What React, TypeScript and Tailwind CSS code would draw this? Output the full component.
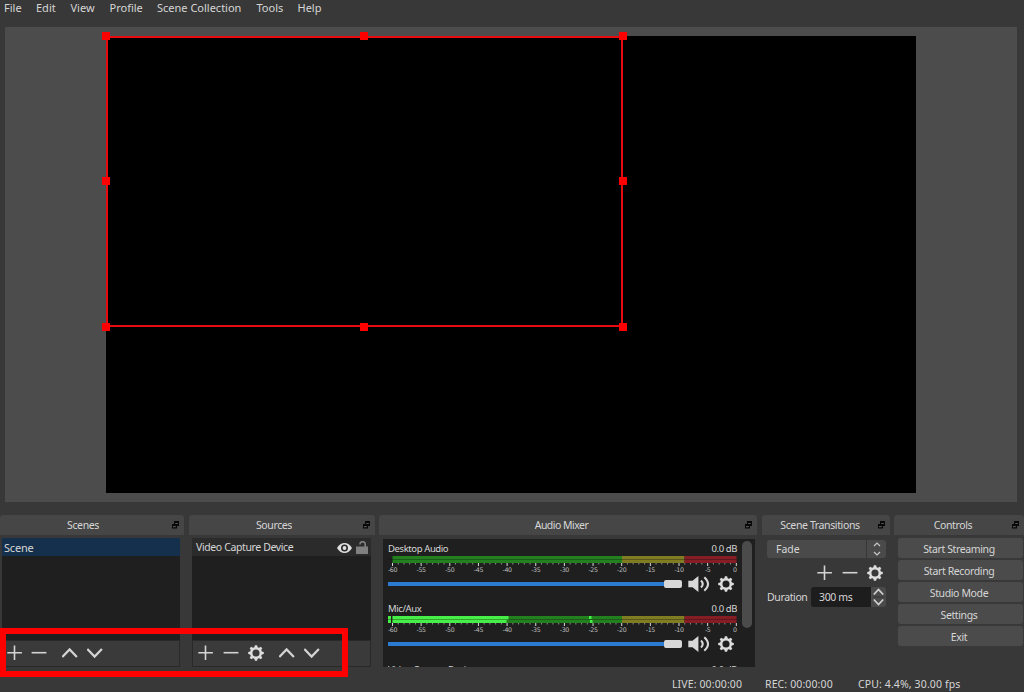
import type { ReactNode } from "react";

// ============================================================
// Icons
// ============================================================

interface IconProps {
  className?: string;
}

function PlusIcon({ className }: IconProps) {
  return (
    <svg className={`size-4 shrink-0 ${className ?? ""}`} fill="none" stroke="#d4d4d4" strokeWidth="1.6" viewBox="0 0 16 16">
      <path d="M7.5 .5v14.4M.3 7.7h14.6" />
    </svg>
  );
}

function MinusIcon({ className }: IconProps) {
  return (
    <svg className={`size-4 shrink-0 ${className ?? ""}`} fill="none" stroke="#d4d4d4" strokeWidth="1.6" viewBox="0 0 16 16">
      <path d="M.6 7.7h14.8" />
    </svg>
  );
}

function ChevronIcon({ down = false, className }: IconProps & { down?: boolean }) {
  return (
    <svg className={`size-4 shrink-0 ${className ?? ""}`} fill="none" stroke="#d4d4d4" strokeWidth="2.2" viewBox="0 0 16 16">
      <path d={down ? "M.3 4 7.6 11.6 14.9 4" : "M.3 12 7.6 4.4l7.3 7.6"} />
    </svg>
  );
}

const GEAR_ANGLES = [0, 45, 90, 135, 180, 225, 270, 315];

function GearIcon({ className }: IconProps) {
  return (
    <svg className={`size-4 shrink-0 ${className ?? ""}`} viewBox="0 0 16 16">
      <circle cx="8" cy="8" fill="none" r="4.8" stroke="#dcdcdc" strokeWidth="2.5" />
      {GEAR_ANGLES.map((angle) => (
        <path d="M6.2 3 6.9 .2h2.2L9.8 3z" fill="#dcdcdc" key={angle} transform={`rotate(${angle} 8 8)`} />
      ))}
    </svg>
  );
}

function SpeakerIcon() {
  return (
    <svg className="h-4 w-[22px] shrink-0" fill="none" viewBox="0 0 22 16">
      <path d="M.3 4.7h4.2L10.4 0v16L4.500 11.300H.3z" fill="#d8d8d8" />
      <path d="M13 4.500q3.500 3.500 0 7" stroke="#d8d8d8" strokeWidth="2" />
      <path d="M16.300 1.300q7.500 6.700 0 13.400" stroke="#d8d8d8" strokeWidth="2" />
    </svg>
  );
}

function EyeIcon() {
  return (
    <svg className="h-[10px] w-[15px] shrink-0" viewBox="0 0 15 10">
      <path d="M0 5Q3 0 7.500 0T15 5Q12 10 7.500 10T0 5z" fill="#e0e0e0" />
      <circle cx="7.5" cy="5" fill="#2b2b2b" r="3.5" />
      <circle cx="7.5" cy="5" fill="#e0e0e0" r="1.9" />
    </svg>
  );
}

function UnlockIcon() {
  return (
    <svg className="h-[13px] w-[12px] shrink-0" viewBox="0 0 12 13">
      <path d="M0 5.500h12V13H0z" fill="#808080" />
      <path d="M4 3.500V3a2.600 2.300 0 0 1 5.200 0v3.500" fill="none" stroke="#808080" strokeWidth="1.6" />
    </svg>
  );
}

function FloatIcon() {
  return (
    <svg className="h-2 w-[7px] shrink-0" viewBox="0 0 7 8">
      <path d="M2 0h5v5H5v2.500H0V3h2z" fill="#080808" />
      <path d="M3.200 2h2.600v1H3.200zM1 5h2.800v1.300H1z" fill="#555" />
    </svg>
  );
}

// ============================================================
// Docks
// ============================================================

interface DockProps {
  title: string;
  className: string;
  titleClassName: string;
  children: ReactNode;
}

function Dock({ title, className, titleClassName, children }: DockProps) {
  return (
    <section className={`flex shrink-0 flex-col ${className}`}>
      <header className="flex h-5 items-center justify-between rounded-t-[3px] bg-[#464646] pr-[5px]">
        <h2 className={`flex-1 pt-[1.5px] text-center ${titleClassName}`}>{title}</h2>
        <FloatIcon />
      </header>
      {children}
    </section>
  );
}

interface Channel {
  name: string;
  level?: number;
}

const CHANNELS: Channel[] = [{ name: "Desktop Audio" }, { name: "Mic/Aux", level: 120.5 }];
const TICKS = Array.from({ length: 61 }, (_, i) => i);

/** Volume meter: 0 dB sits at x=348 and -60 dB at x=4. */
function Meter({ level }: { level?: number }) {
  return (
    <svg className="h-[18px] w-[352px]" viewBox="0 0 352 18">
      <path d="M4.500 0H234v7H4.500z" fill="#22801f" />
      <path d="M234 0h62.500v7H234z" fill="#7f7c22" />
      <path d="M296.500 0h52v7h-52z" fill="#861d24" />
      {level ? (
        <>
          <path d={`M0 0h3v7H0zM4.500 0H${level}v4h-2v3H4.500z`} fill="#45ef45" />
          <path d="M201 0h2.500v3H201zM202 4h2.500v3H202z" fill="#45ef45" />
        </>
      ) : null}
      <path d="M0 3h348.500v1H0z" fill="#101010" opacity=".35" />
      {TICKS.map((i) => (
        <path
          d={`M${4.5 + i * 5.73} 7v${i % 5 === 0 ? 3 : 1.5}`}
          key={i}
          stroke={i % 5 === 0 ? "#d8d8d8" : "#8b8b8b"}
          strokeWidth="1"
        />
      ))}
      {TICKS.filter((i) => i % 5 === 0).map((i) => (
        <text
          className="font-['DejaVu_Sans']"
          fill="#bcbcbc"
          fontSize="6.3"
          key={i}
          textAnchor="middle"
          x={4.5 + i * 5.73 - (i === 60 ? 1.5 : 0)}
          y="15.5"
        >
          {i - 60}
        </text>
      ))}
    </svg>
  );
}

function ChannelName({ name }: { name: string }) {
  return (
    <div className="flex h-4 shrink-0 items-center justify-between pt-0.5 pr-[3px] text-[9.5px] tracking-[-0.4px]">
      <span>{name}</span>
      <span>0.0 dB</span>
    </div>
  );
}

function MixerChannel({ name, level }: Channel) {
  return (
    <div className="flex h-[60px] shrink-0 flex-col">
      <ChannelName name={name} />
      <Meter level={level} />
      <div className="flex h-5 items-center">
        <div className="h-1 w-[276px] bg-[#2b7bd3]" />
        <div className="h-2 w-[18px] rounded-[2px] bg-[#d8d8d8]" />
        <div className="ml-1.5 flex items-center gap-2">
          <SpeakerIcon />
          <GearIcon />
        </div>
      </div>
    </div>
  );
}

// ============================================================
// Page
// ============================================================

const MENU = [
  { label: "File", className: "w-[32px]" },
  { label: "Edit", className: "w-[34.5px]" },
  { label: "View", className: "w-[39px]" },
  { label: "Profile", className: "w-[47.5px]" },
  { label: "Scene Collection", className: "w-[99.5px]" },
  { label: "Tools", className: "w-[41px]" },
  { label: "Help", className: "" }
];

const CONTROLS = ["Start Streaming", "Start Recording", "Studio Mode", "Settings", "Exit"];

const HANDLES = [
  "left-[-6px] top-[-6px]",
  "left-[252px] top-[-6px]",
  "right-[-6px] top-[-6px]",
  "left-[-6px] top-[139px]",
  "right-[-6px] top-[139px]",
  "left-[-6px] bottom-[-6px]",
  "left-[252px] bottom-[-6px]",
  "right-[-6px] bottom-[-6px]"
];

export default function App() {
  return (
    <div className="relative flex h-[692px] w-[1024px] flex-col overflow-hidden bg-[#383838] font-['Noto_Sans',sans-serif] text-[10.5px] whitespace-nowrap text-[#d6d6d6]">
      <nav className="flex h-[27px] shrink-0 pl-1 text-[11px] leading-4">
        {MENU.map((item) => (
          <span className={item.className} key={item.label}>
            {item.label}
          </span>
        ))}
      </nav>

      <main className="ml-[5px] h-[475px] w-[1012px] shrink-0 bg-[#4c4c4c] pt-[9px] pl-[101px]">
        <div className="h-[457px] w-[810px] bg-black">
          <div className="relative h-[291px] w-[517px] border-2 border-[#e60b0f]">
            {HANDLES.map((position) => (
              <span className={`absolute size-2 bg-[#fe0000] ${position}`} key={position} />
            ))}
          </div>
        </div>
      </main>

      <div className="mt-[13px] flex h-[155px] shrink-0 tracking-[-0.38px]">
        <Dock className="w-[184px]" title="Scenes" titleClassName="pr-[6px]">
          <div className="mt-[3px] ml-0.5 flex h-[129px] w-[178px] flex-col bg-[#1f1f1f]">
            <div className="flex h-[18px] items-center bg-[#15304d] pt-0.5 pl-0.5 text-[11px] tracking-[-0.2px]">Scene</div>
            <div className="mt-auto flex h-[27px] items-center border border-[#292929] bg-[#3a3a3a] pb-px pl-[4px]">
              <PlusIcon />
              <MinusIcon className="ml-[8px]" />
              <ChevronIcon className="ml-[15px]" />
              <ChevronIcon className="ml-[9px]" down />
            </div>
          </div>
        </Dock>

        <Dock className="ml-[5px] w-[186px]" title="Sources" titleClassName="pr-[4px]">
          <div className="mt-[3px] ml-[3px] flex h-[129px] w-[179px] flex-col bg-[#1f1f1f]">
            <div className="flex h-[18px] items-center bg-[#2b2b2b] pt-px pr-[3px] pl-1">
              <span className="flex-1 pt-[1.5px]">Video Capture Device</span>
              <EyeIcon />
              <span className="w-1" />
              <UnlockIcon />
            </div>
            <div className="mt-auto flex h-[27px] items-center border border-[#292929] bg-[#3a3a3a] pb-px pl-[5px]">
              <PlusIcon />
              <MinusIcon className="ml-[9px]" />
              <GearIcon className="ml-[9px]" />
              <ChevronIcon className="ml-[15px]" />
              <ChevronIcon className="ml-[9px]" down />
            </div>
          </div>
        </Dock>

        <Dock className="ml-1 w-[378px]" title="Audio Mixer" titleClassName="pr-px tracking-[-0.52px]">
          <div className="mt-1 ml-1 flex h-[128px] w-[372px] justify-between overflow-hidden bg-[#1f1f1f] pr-[3px] pl-[5px]">
            <div className="flex flex-col pt-px">
              {CHANNELS.map((channel) => (
                <MixerChannel key={channel.name} {...channel} />
              ))}
              <div className="mt-px">
                <ChannelName name="Video Capture Device" />
              </div>
            </div>
            <div className="mt-0.5 h-[87px] w-[10px] rounded-full bg-[#4b4b4b]" />
          </div>
        </Dock>

        <Dock className="ml-[5px] w-[128px]" title="Scene Transitions" titleClassName="">
          <div className="mt-[5px] ml-[5px] flex w-[119px] flex-col">
            <div className="flex h-[18px] rounded-[3px] bg-[#4a4a4a]">
              <span className="flex flex-1 items-center pt-0.5 pl-[9px] tracking-normal">Fade</span>
              <span className="flex w-5 items-center justify-center border-l border-[#373737]">
                <svg className="h-[14px] w-[8px]" fill="none" stroke="#c8c8c8" strokeWidth="1.2" viewBox="0 0 8 14">
                  <path d="m1 4 3-3 3 3M1 10l3 3 3-3" />
                </svg>
              </span>
            </div>
            <div className="mt-[7px] flex justify-end gap-[9px] pr-[3px]">
              <PlusIcon />
              <MinusIcon />
              <GearIcon />
            </div>
            <div className="mt-[6px] flex h-5 items-center">
              <span className="w-[44px] pt-0.5">Duration</span>
              <span className="flex h-5 w-[60px] items-center rounded-l-[3px] bg-[#1d1d1d] pt-0.5 pl-2">300 ms</span>
              <span className="flex h-5 w-[15px] items-center justify-center rounded-r-[3px] bg-[#4a4a4a]">
                <svg className="h-[18px] w-[11px]" fill="none" stroke="#d0d0d0" strokeWidth="1.8" viewBox="0 0 11 18">
                  <path d="m.8 6.500 4.700-5 4.700 5M.8 11.500l4.700 5 4.700-5" />
                  <path d="M0 9h11" stroke="#353535" strokeWidth="1" />
                </svg>
              </span>
            </div>
          </div>
        </Dock>

        <Dock className="ml-[4px] w-[130px]" title="Controls" titleClassName="">
          <div className="mt-[3px] ml-1 flex w-[125px] flex-col gap-0.5">
            {CONTROLS.map((label) => (
              <button
                className="flex h-5 items-center justify-center rounded-[3px] bg-[#4b4b4b] pt-[3px] pr-[3px]"
                key={label}
                type="button"
              >
                {label}
              </button>
            ))}
          </div>
        </Dock>
      </div>

      <footer className="mt-[7px] flex h-4 items-center pl-[672px] tracking-[0.12px]">
        <span className="w-[93px]">LIVE: 00:00:00</span>
        <span className="w-[93px]">REC: 00:00:00</span>
        <span>CPU: 4.4%, 30.00 fps</span>
      </footer>

      {/* Highlight around the list toolbars */}
      <div className="absolute top-[628px] left-0 h-[49px] w-[348px] border-6 border-[#fe0000]" />
    </div>
  );
}
